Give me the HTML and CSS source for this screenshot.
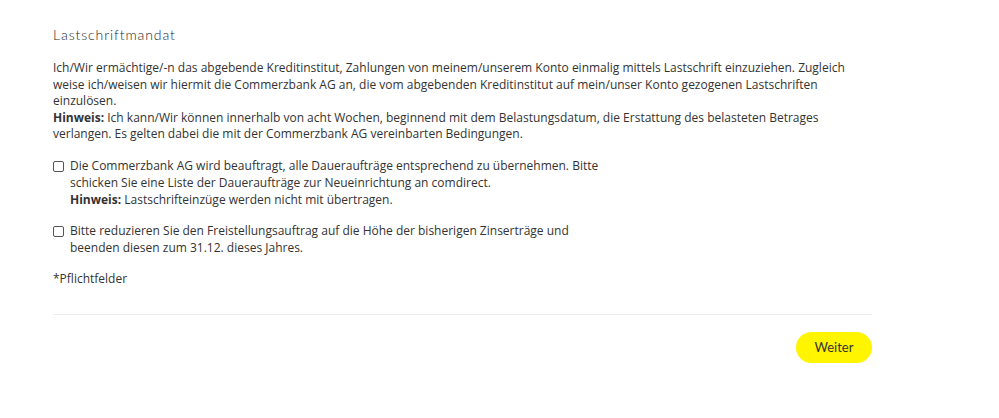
FILE: index.html
```html
<!DOCTYPE html>
<html lang="de">
<head>
<meta charset="utf-8">
<link rel="stylesheet" href="styles.css">
</head>
<body>
<div class="page">
  <h2 class="title">Lastschriftmandat</h2>
  <p class="text">Ich/Wir ermächtige/-n das abgebende Kreditinstitut, Zahlungen von meinem/unserem Konto einmalig mittels Lastschrift einzuziehen. Zugleich weise ich/weisen wir hiermit die Commerzbank AG an, die vom abgebenden Kreditinstitut auf mein/unser Konto gezogenen Lastschriften einzulösen.<br><b>Hinweis:</b> Ich kann/Wir können innerhalb von acht Wochen, beginnend mit dem Belastungsdatum, die Erstattung des belasteten Betrages verlangen. Es gelten dabei die mit der Commerzbank AG vereinbarten Bedingungen.</p>
  <label class="check">
    <span class="box"></span>
    <span class="label">Die Commerzbank AG wird beauftragt, alle Daueraufträge entsprechend zu übernehmen. Bitte schicken Sie eine Liste der Daueraufträge zur Neueinrichtung an comdirect.<br><b>Hinweis:</b> Lastschrifteinzüge werden nicht mit übertragen.</span>
  </label>
  <label class="check">
    <span class="box"></span>
    <span class="label">Bitte reduzieren Sie den Freistellungsauftrag auf die Höhe der bisherigen Zinserträge und beenden diesen zum 31.12. dieses Jahres.</span>
  </label>
  <p class="req">*Pflichtfelder</p>
  <div class="divider"></div>
  <div class="actions">
    <button class="btn">Weiter</button>
  </div>
</div>
</body>
</html>
```
FILE: styles.css
```css
html, body {
  margin: 0;
  padding: 0;
  background: #fff;
}
body {
  font-family: "Open Sans", "Liberation Sans", sans-serif;
  color: #333;
}
.page {
  width: 819px;
  margin-left: 53px;
  padding-top: 26px;
}
.title {
  margin: 0;
  font-family: "Lato", "Open Sans", sans-serif;
  font-weight: 300;
  font-size: 14px;
  letter-spacing: 0.9px;
  line-height: 18px;
  color: #1f1f1f;
}
.text {
  margin: 16px 0 0;
  font-size: 12px;
  line-height: 16.6px;
}
b {
  font-weight: 700;
}
.check {
  display: flex;
  gap: 6px;
  margin-top: 15px;
  font-size: 12px;
  line-height: 16.8px;
}
.check + .check {
  margin-top: 15px;
}
.box {
  flex: none;
  width: 9px;
  height: 9px;
  border: 1px solid #555;
  border-radius: 2px;
  margin-top: 3px;
  background: #fff;
}
.label {
  width: 550px;
}
.req {
  margin: 13px 0 0;
  font-size: 12px;
  line-height: 17px;
}
.divider {
  margin-top: 27px;
  height: 1px;
  background: #ececec;
}
.actions {
  display: flex;
  justify-content: flex-end;
  margin-top: 17px;
}
.btn {
  width: 76px;
  height: 31px;
  border: none;
  border-radius: 16px;
  background: #fff500;
  font-family: "Lato", "Open Sans", sans-serif;
  font-size: 13px;
  color: #333;
  padding: 0;
}
```
